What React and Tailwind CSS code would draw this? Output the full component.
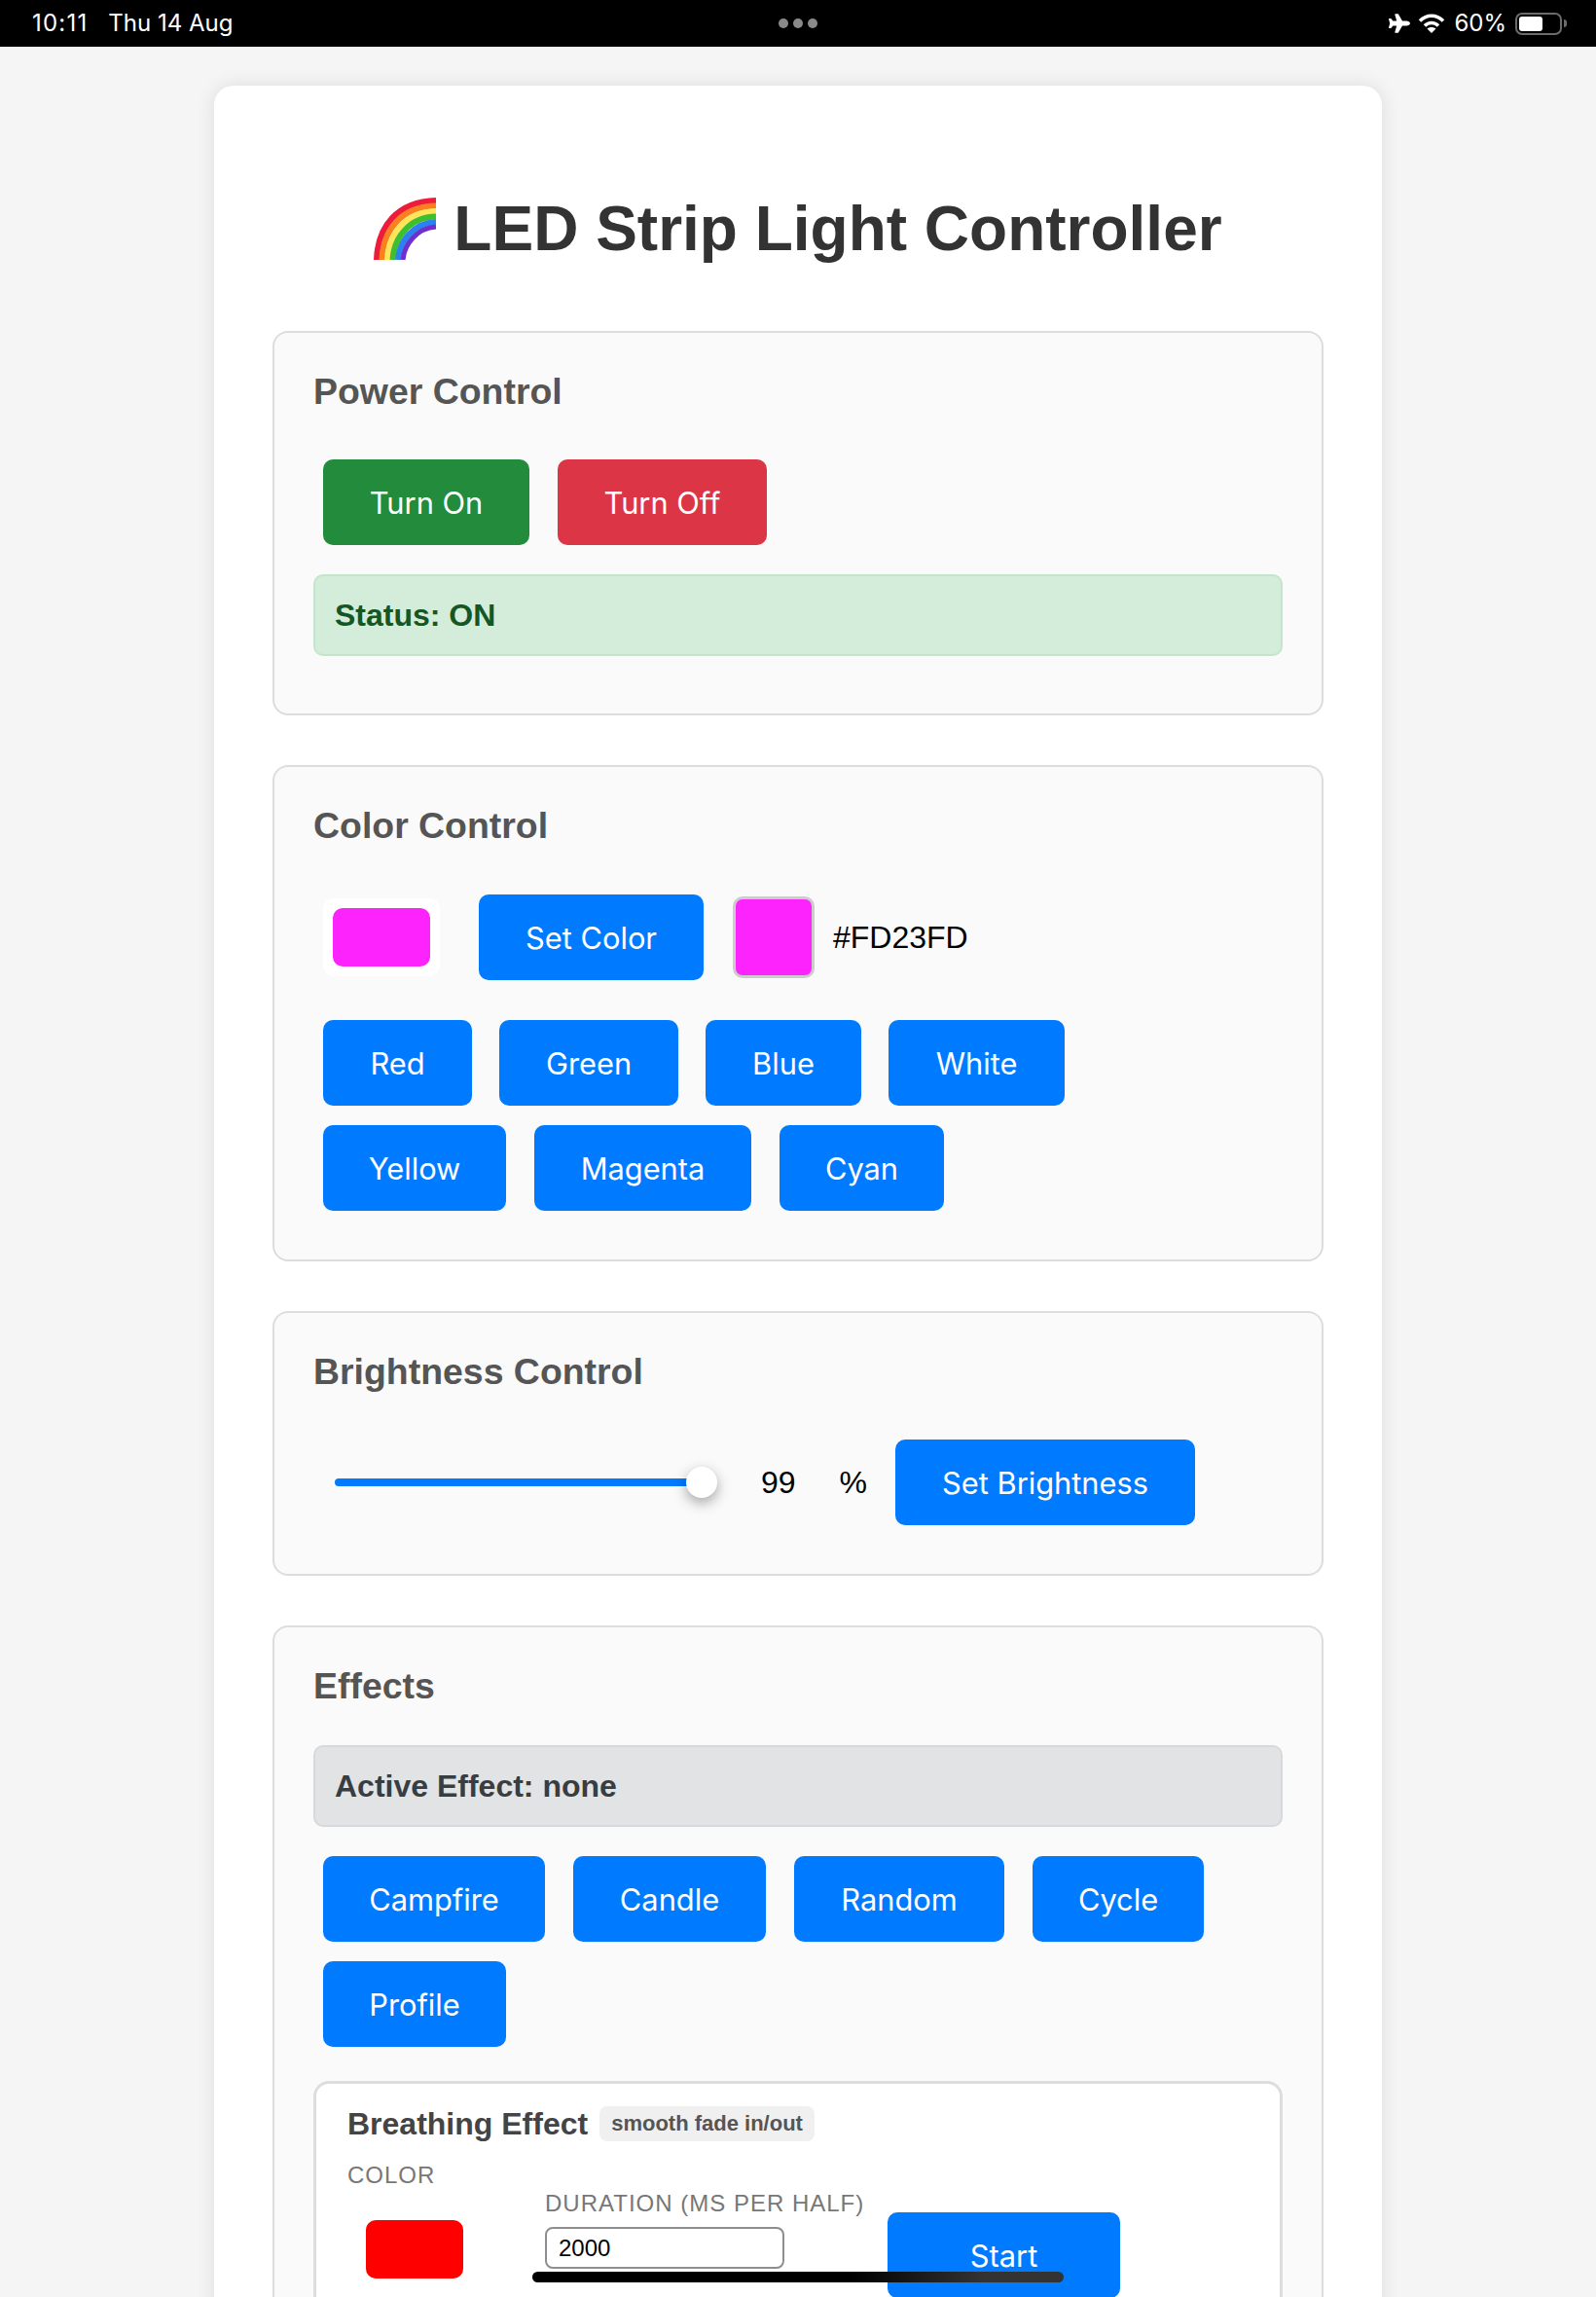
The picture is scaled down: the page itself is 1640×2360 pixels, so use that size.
import React from "react";
import { FaPlane } from "react-icons/fa";

const powerButtons = [
  { label: "Turn On", className: "w-[212px] bg-[#228b3c]" },
  { label: "Turn Off", className: "w-[215px] bg-[#dc3545]" },
];
const colorRowOne = [
  { label: "Red", className: "w-[153px]" },
  { label: "Green", className: "w-[184px]" },
  { label: "Blue", className: "w-[160px]" },
  { label: "White", className: "w-[181px]" },
];
const colorRowTwo = [
  { label: "Yellow", className: "w-[188px]" },
  { label: "Magenta", className: "w-[223px]" },
  { label: "Cyan", className: "w-[169px]" },
];
const effectRowOne = [
  { label: "Campfire", className: "w-[228px]" },
  { label: "Candle", className: "w-[198px]" },
  { label: "Random", className: "w-[216px]" },
  { label: "Cycle", className: "w-[176px]" },
];

const Button = ({ label, className = "w-[212px] bg-[#007bff]" }) => (
  <button className={`h-[88px] shrink-0 rounded-[10px] bg-[#007bff] pt-[2px] font-[Inter] text-[30.8px] text-white ${className}`}>
    {label}
  </button>
);

const Section = ({ title, titleGap, className, children }) => (
  <section className={`rounded-2xl border-2 border-[#ddd] bg-[#fafafa] px-[40px] pt-[40px] ${className}`}>
    <h3 className={`h-[43px] text-[37.44px] leading-[41px] font-bold text-[#555] ${titleGap}`}>{title}</h3>
    {children}
  </section>
);

const ColorInput = ({ color }) => (
  <div className="flex h-[80px] w-[120px] shrink-0 items-center justify-center rounded-[10px] bg-white">
    <div className={`h-[60px] w-[100px] rounded-[10px] ${color}`} />
  </div>
);

const Rainbow = () => (
  <svg width="64" height="64" viewBox="0 0 64 64" fill="none" className="shrink-0">
    <path d="M3 64C4 30 24 4 64 3" stroke="#ee1c3a" strokeWidth="6" />
    <path d="M8.500 64C9.500 34 28 9 64 8.500" stroke="#f9801c" strokeWidth="6" />
    <path d="M14 64C15 38 32 15 64 14" stroke="#fde65c" strokeWidth="6" />
    <path d="M19.500 64C20.500 42 36 20 64 19.500" stroke="#3fbf2e" strokeWidth="6" />
    <path d="M25 64C26 46 40 26 64 25" stroke="#2b82ee" strokeWidth="6" />
    <path d="M30 64C31 49 44 31 64 30" stroke="#6f2fd0" strokeWidth="5" />
  </svg>
);

const StatusBar = () => (
  <header className="flex h-[48px] items-center justify-between bg-black pr-[30px] pl-[33px] font-[Inter] text-[24px] text-white">
    <div className="flex w-[397px] gap-[21px]">
      <span className="tracking-[1.2px]">10:11</span>
      <span>Thu 14 Aug</span>
    </div>
    <div className="flex gap-[5px]">
      <span className="h-[10px] w-[10px] rounded-full bg-[#8a8a8a]" />
      <span className="h-[10px] w-[10px] rounded-full bg-[#8a8a8a]" />
      <span className="h-[10px] w-[10px] rounded-full bg-[#8a8a8a]" />
    </div>
    <div className="flex w-[400px] items-center justify-end">
      <FaPlane className="mr-[8px] text-[22px]" />
      <svg width="28" height="22" viewBox="0 0 28 22" fill="none" className="mr-[9px]">
        <path d="M2 8.500C9 1.500 19 1.500 26 8.500" stroke="white" strokeWidth="3.500" />
        <path d="M7 13.500C11 9.500 17 9.500 21 13.500" stroke="white" strokeWidth="3.500" />
        <path d="M14 21L9.500 16.500C12 14.500 16 14.500 18.500 16.500Z" fill="white" />
      </svg>
      <span className="mr-[9px]">60%</span>
      <div className="flex h-[23px] w-[48px] items-center rounded-[7px] border-2 border-[#6b6b6b] p-[2px]">
        <div className="h-full w-[24px] rounded-[3px] bg-white" />
      </div>
      <div className="ml-[2px] h-[8px] w-[3px] rounded-r-full bg-[#6b6b6b]" />
    </div>
  </header>
);

const App = () => {
  return (
    <div className="relative h-[2360px] overflow-hidden bg-[#f5f5f5] font-['Liberation_Sans',sans-serif]">
      <StatusBar />
      <main className="mx-auto mt-[40px] w-[1200px] rounded-[20px] bg-white px-[60px] pt-[110px] shadow-[0_0_20px_rgba(0,0,0,0.1)]">
        <h1 className="mb-[68px] flex h-[74px] items-center justify-center gap-[18px] text-[64px] leading-[74px] font-bold text-[#333]">
          <Rainbow />
          LED Strip Light Controller
        </h1>

        <div className="flex flex-col gap-[51px]">
          <Section title="Power Control" titleGap="mb-[47px]" className="pb-[39px]">
            <div className="ml-[10px] flex gap-[29px]">
              {powerButtons.map((b) => (
                <Button key={b.label} label={b.label} className={b.className} />
              ))}
            </div>
            <div className="mt-[30px] mb-[20px] h-[84px] rounded-[10px] border-2 border-[#c3e6cb] bg-[#d4edda] px-[20px] text-[32px] leading-[80px] font-bold text-[#155724]">
              Status: ON
            </div>
          </Section>

          <Section title="Color Control" titleGap="mb-[48px]" className="pb-[50px]">
            <div className="ml-[10px] flex flex-col">
              <div className="flex h-[88px] items-center">
                <ColorInput color="bg-[#fd23fd]" />
                <div className="ml-[40px]">
                  <Button label="Set Color" className="w-[231px]" />
                </div>
                <div className="ml-[30px] h-[84px] w-[84px] rounded-[10px] border-[3px] border-[#ccc] bg-[#fd23fd]" />
                <span className="ml-[19px] text-[32px] text-black">#FD23FD</span>
              </div>
              <div className="mt-[41px] flex gap-[28px]">
                {colorRowOne.map((b) => (
                  <Button key={b.label} label={b.label} className={b.className} />
                ))}
              </div>
              <div className="mt-[20px] flex gap-[29px]">
                {colorRowTwo.map((b) => (
                  <Button key={b.label} label={b.label} className={b.className} />
                ))}
              </div>
            </div>
          </Section>

          <Section title="Brightness Control" titleGap="mb-[47px]" className="pb-[50px]">
            <div className="flex h-[88px] items-center">
              <div className="ml-[22px] flex w-[395px] items-center">
                <div className="h-[8px] w-[363px] rounded-l-full bg-[#007bff] shadow-[0_0_0_2px_white]" />
                <div className="-ml-[2px] h-[32px] w-[32px] rounded-full bg-white shadow-[0_5px_14px_rgba(0,0,0,0.35)]" />
              </div>
              <span className="ml-[43px] text-[32px] text-black">99</span>
              <span className="ml-[45px] text-[32px] text-black">%</span>
              <div className="ml-[29px]">
                <Button label="Set Brightness" className="w-[308px]" />
              </div>
            </div>
          </Section>

          <Section title="Effects" titleGap="mb-[38px]" className="pb-[40px]">
            <div className="h-[84px] rounded-[10px] border-2 border-[#d6d8db] bg-[#e2e3e5] px-[20px] text-[32px] leading-[80px] font-bold text-[#383d41]">
              Active Effect: none
            </div>
            <div className="mt-[30px] ml-[10px] flex flex-col gap-[20px]">
              <div className="flex gap-[29px]">
                {effectRowOne.map((b) => (
                  <Button key={b.label} label={b.label} className={b.className} />
                ))}
              </div>
              <Button label="Profile" className="w-[188px]" />
            </div>
            <div className="mt-[35px] h-[400px] rounded-2xl border-[3px] border-[#ddd] bg-white px-[32px] pt-[23px]">
              <div className="flex h-[36px] items-center">
                <h4 className="text-[32px] leading-[36px] font-bold text-[#444]">Breathing Effect</h4>
                <span className="ml-[12px] h-[36px] rounded-lg bg-[#f0f0f0] px-[12px] text-[22px] leading-[36px] font-bold text-[#555]">
                  smooth fade in/out
                </span>
              </div>
              <div className="mt-[22px] flex items-start">
                <div className="w-[203px]">
                  <div className="-mt-[1px] h-[28px] text-[24px] leading-[28px] tracking-[1px] text-[#777]">COLOR</div>
                  <div className="mt-[22px] ml-[9px]">
                    <ColorInput color="bg-[#ff0000]" />
                  </div>
                </div>
                <div className="mt-[28px] w-[352px]">
                  <div className="h-[28px] text-[24px] leading-[28px] tracking-[1px] text-[#777]">DURATION (MS PER HALF)</div>
                  <input
                    readOnly
                    value="2000"
                    className="mt-[10px] h-[43px] w-[246px] rounded-lg border-2 border-[#8e8e8e] bg-white px-[12px] text-[24px] text-black outline-none"
                  />
                </div>
                <div className="mt-[51px]">
                  <Button label="Start" className="w-[239px]" />
                </div>
              </div>
            </div>
          </Section>
        </div>
      </main>
      <div className="absolute top-[2334px] left-[547px] h-[11px] w-[546px] rounded-full bg-[linear-gradient(to_right,#000_60%,#333_85%)]" />
    </div>
  );
};

export default App;
